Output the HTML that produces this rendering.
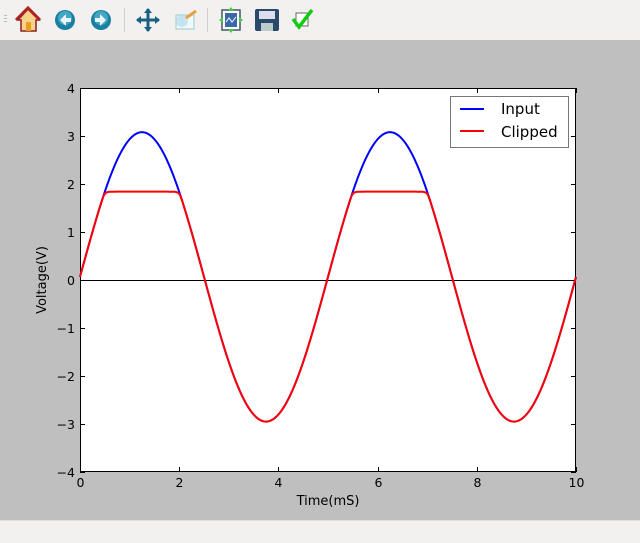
<!DOCTYPE html>
<html><head><meta charset="utf-8"><style>
body{margin:0;width:640px;height:542px;overflow:hidden;background:#bfbfbf;font-family:"DejaVu Sans","Liberation Sans",sans-serif;}
#tb{position:absolute;left:0;top:0;width:640px;height:40px;background:#f2f1f0;}
#sb{position:absolute;left:0;top:520px;width:640px;height:22px;background:#f2f1f0;border-top:1px solid #e0e0e0;}
svg{position:absolute;left:0;top:0}
text{font-family:"DejaVu Sans","Liberation Sans",sans-serif;fill:#000}
</style></head><body>
<div id="tb"></div><div id="sb"></div>
<svg width="640" height="542" id="s">
<g>
<rect x="4" y="15" width="3" height="1" fill="#bbb"/><rect x="4" y="18" width="3" height="1" fill="#bbb"/><rect x="4" y="21" width="3" height="1" fill="#bbb"/>
<path d="M18 20 L28 9 L39 20 L36 20 L36 31 L21 31 L21 20 Z" fill="#f6d28a" stroke="#8a2020" stroke-width="1.5"/>
<path d="M16 20 L28 8 L40 20" fill="none" stroke="#b02020" stroke-width="3"/>
<rect x="26" y="22" width="5" height="9" fill="#e8a020"/>
<circle cx="65" cy="20" r="10" fill="#1a7fa0"/><circle cx="65" cy="18" r="7" fill="#5ec0dc" opacity=".6"/>
<path d="M60 20 L66 14 L66 18 L71 18 L71 22 L66 22 L66 26 Z" fill="#e8f4f8"/>
<circle cx="101" cy="20" r="10" fill="#1a7fa0"/><circle cx="101" cy="18" r="7" fill="#5ec0dc" opacity=".6"/>
<path d="M106 20 L100 14 L100 18 L95 18 L95 22 L100 22 L100 26 Z" fill="#e8f4f8"/>
<rect x="124" y="8" width="1" height="24" fill="#d0d0d0"/>
<path d="M148 9 L148 31 M137 20 L159 20" stroke="#1a5f80" stroke-width="3"/>
<path d="M148 8 L144 13 L152 13Z M148 32 L144 27 L152 27Z M136 20 L141 16 L141 24Z M160 20 L155 16 L155 24Z" fill="#1a5f80"/>
<rect x="176" y="15" width="18" height="14" fill="#f0f8fc" stroke="#9cc" />
<circle cx="182" cy="21" r="6" fill="#bde" opacity=".8"/>
<path d="M186 18 L196 11" stroke="#e8a040" stroke-width="3"/>
<rect x="207" y="8" width="1" height="24" fill="#d0d0d0"/>
<rect x="222" y="10" width="18" height="20" fill="#fff" stroke="#456" stroke-width="1.5"/>
<rect x="225" y="13" width="12" height="14" fill="#3a68a8"/>
<path d="M226 22 L229 18 L232 22 L236 17" stroke="#fff" fill="none"/>
<path d="M231 7 L228 11 L234 11Z M231 33 L228 29 L234 29Z M219 20 L223 17 L223 23Z M243 20 L239 17 L239 23Z" fill="#4c4"/>
<rect x="255" y="9" width="24" height="22" rx="2" fill="#2a4a6a"/>
<rect x="259" y="11" width="16" height="8" fill="#dde"/>
<rect x="261" y="23" width="12" height="8" fill="#bcc"/>
<rect x="296" y="13" width="12" height="13" fill="#fff" stroke="#666"/>
<path d="M293 19 L299 27 L312 10" stroke="#1c1" stroke-width="3.5" fill="none"/>
</g>
<rect x="80.5" y="88.5" width="495" height="383" fill="#fff" stroke="#000" stroke-width="1" shape-rendering="crispEdges"/>
<line x1="80" y1="280.5" x2="576" y2="280.5" stroke="#000" stroke-width="1" shape-rendering="crispEdges"/>
<g id="ticks" stroke="#000" shape-rendering="crispEdges"></g>
<g id="lbl" font-size="12.5"></g>
<polyline id="pin" fill="none" stroke="#0000ff" stroke-width="2"/>
<polyline id="pcl" fill="none" stroke="#ff0000" stroke-width="2"/>
<rect x="450.5" y="96.5" width="118" height="51" fill="#fff" stroke="#777"/>
<line x1="460" y1="109" x2="484" y2="109" stroke="#0000ff" stroke-width="2"/>
<line x1="460" y1="131" x2="484" y2="131" stroke="#ff0000" stroke-width="2"/>
<text x="501" y="114" font-size="15">Input</text>
<text x="501" y="137" font-size="15">Clipped</text>
<text x="328" y="505" font-size="13" text-anchor="middle">Time(mS)</text>
<text x="46" y="280" font-size="13" text-anchor="middle" transform="rotate(-90 46 280)">Voltage(V)</text>
</svg>
<script>
var t=document.getElementById('ticks'),l=document.getElementById('lbl'),ns='http://www.w3.org/2000/svg';
function el(p,n,a){var e=document.createElementNS(ns,n);for(var k in a)e.setAttribute(k,a[k]);p.appendChild(e);return e;}
for(var i=0;i<=5;i++){var x=Math.round(80+i*99.2)+0.5;el(t,'line',{x1:x,y1:472,x2:x,y2:467});el(t,'line',{x1:x,y1:88,x2:x,y2:93});
var e=el(l,'text',{x:x,y:487,'text-anchor':'middle'});e.textContent=i*2;}
for(var v=-4;v<=4;v++){var y=280-v*48+0.5;el(t,'line',{x1:80,y1:y,x2:85,y2:y});el(t,'line',{x1:576,y1:y,x2:571,y2:y});
var e=el(l,'text',{x:75,y:y+4.5,'text-anchor':'end'});e.textContent=(v<0?'\u2212'+(-v):v);}
var a=[],b=[];
for(var k=0;k<=400;k++){var tt=k/40,s=3.015*Math.sin(2*Math.PI*tt/5)+0.065;
var c=s;if(s>1.65){var d=s-1.65;c=1.65+0.19*Math.tanh(d/0.19);}
var x=80+tt*49.6;a.push(x+','+(280-s*48));b.push(x+','+(280-c*48));}
document.getElementById('pin').setAttribute('points',a.join(' '));
document.getElementById('pcl').setAttribute('points',b.join(' '));
</script>
</body></html>
